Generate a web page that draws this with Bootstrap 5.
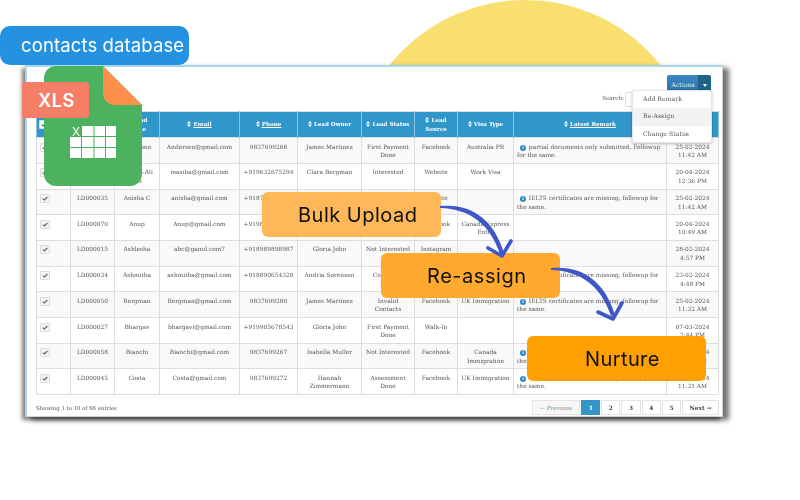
<!DOCTYPE html>
<html lang="en">
<head>
  <meta charset="UTF-8">
  <meta name="viewport" content="width=device-width, initial-scale=1.0">
  <title>Contacts database</title>
  <link href="https://cdn.jsdelivr.net/npm/bootstrap@5.3.0/dist/css/bootstrap.min.css" rel="stylesheet">
  <style>
    body { margin: 0; background: #fff; overflow: hidden; }
    .stage { position: relative; width: 800px; height: 500px; padding: 65px 0 0 25px; overflow: hidden; font-family: Inter, sans-serif; }
    .sun { position: absolute; left: 351px; top: 0; width: 348px; height: 348px; border-radius: 50%; background: #f9df70; }

    /* the screenshot of the app */
    .shot { position: relative; width: 698px; height: 352px; padding: 8px 5px 0 9px; background: #fff; border-top: 2px solid #a9d6f0; border-left: 2px solid #a9d6f0; border-radius: 0; box-shadow: 6px 3px 5px rgba(0,0,0,.55), -3px 3px 4px rgba(0,0,0,.5); font-family: "DejaVu Serif", serif; font-size: 5.9px; line-height: 8.5px; color: #555; filter: blur(.4px); }
    .act-bar { padding-right: 6px; }
    .act-btn { --bs-btn-padding-x: 0; --bs-btn-padding-y: 0; font-size: 6.2px; height: 19px; border: 0; border-radius: 2px; color: #e8f2f8; }
    .act-main { width: 32px; background: linear-gradient(#3c87c3, #2a6ea8); }
    .act-caret { width: 13px; background: #1f6389; }
    .act-caret::after { display: inline-block; content: ""; border-top: 3px solid #fff; border-left: 2px solid transparent; border-right: 2px solid transparent; vertical-align: middle; }
    .act-menu { display: block; position: absolute; z-index: 3; left: 605px; top: 23px; width: 80px; min-width: 0; height: 53px; padding: 0; border: 1px solid #e4e4e4; border-radius: 2px; box-shadow: 0 1px 3px rgba(0,0,0,.25); font-size: 6.2px; }
    .act-menu .dropdown-item { height: 17.3px; padding: 4px 10px; color: #555; }
    .act-menu .dropdown-item.picked { background: #f2f2f2; }
    .search-line { height: 23px; margin-top: -2px; padding-right: 52px; font-size: 5.6px; line-height: 13px; }
    .search-box { width: 40px; height: 15px; border: 1px solid #ddd; border-radius: 2px; margin-left: 1px; }

    .leads { --bs-table-striped-bg: #f9f9f9; --bs-table-border-color: #ddd; --bs-table-color: #555; --bs-table-striped-color: #555; width: 682px; margin: 0; table-layout: fixed; border-color: #ddd; }
    .leads th, .leads td { padding: 4.5px 3px 3px; text-align: center; vertical-align: top; height: 25.7px; font-weight: 400; }
    .leads thead th { --bs-table-bg: #3197ca; --bs-table-color: #fff; height: 26px; padding: 0 2px; vertical-align: middle; color: #fff; font-weight: 700; font-size: 5.6px; border-color: #8cc4e0; }
    .leads thead th.sorted-on { text-decoration: underline; }
    .leads td.txt-left { text-align: left; }
    .sort-mark { width: 4px; height: 6px; margin-right: 2px; vertical-align: -1px; }
    .tick { display: block; width: 10px; height: 9px; border: 1px solid #ddd; border-radius: 1px; background: #f4f4f4; }
    .tick svg { display: block; width: 8px; height: 7px; }
    .info-dot { display: inline-block; width: 6px; height: 6px; margin: 0 1px 0 3px; border-radius: 50%; background: #2b87c5; color: #fff; font-size: 4.5px; line-height: 6px; text-align: center; font-weight: 700; }
    .c-box { width: 34px; } .c-id { width: 44px; } .c-name { width: 45px; } .c-mail { width: 80px; } .c-ph { width: 58px; }
    .c-own { width: 64px; } .c-st { width: 53px; } .c-src { width: 43px; } .c-visa { width: 56px; } .c-rem { width: 153px; } .c-date { width: 52px; }

    .shot-foot { height: 24px; width: 683px; padding-top: 5px; }
    .shot-foot .pagination { --bs-pagination-padding-x: 0; --bs-pagination-padding-y: 0; --bs-pagination-font-size: 5.8px; --bs-pagination-color: #444; --bs-pagination-border-color: #e4e4e4; --bs-pagination-active-bg: #3197ca; --bs-pagination-active-border-color: #3197ca; gap: 1px; margin: 0; }
    .shot-foot .page-link { width: 19.2px; height: 15px; margin-left: 0 !important; line-height: 14px; text-align: center; font-weight: 700; border-radius: 0 !important; }
    .shot-foot .page-link.pg-prev { width: 48px; font-weight: 400; color: #888; background: #f7f7f7; }
    .shot-foot .page-link.pg-next { width: 37px; }
    .foot-note { padding-top: 4px; font-size: 5.4px; }

    /* things laid over the screenshot */
    .db-label { position: absolute; z-index: 5; left: 0; top: 26px; width: 189px; height: 39px; padding-left: 21px; border-radius: 10px; background: #2492e0; color: #fff; font-size: 18.5px; line-height: 39px; letter-spacing: .12px; white-space: nowrap; filter: blur(.3px); }
    .xls-doc { position: absolute; z-index: 4; left: 44px; top: 66px; width: 98px; height: 120px; }
    .xls-tag { position: absolute; z-index: 5; left: 22px; top: 82px; width: 67px; height: 36px; padding-left: 2px; border-radius: 3px; background: #f47f66; color: #fff; font-size: 18px; font-weight: 600; line-height: 37px; text-align: center; letter-spacing: .5px; }
    .step { position: absolute; z-index: 6; width: 179px; height: 45px; border-radius: 6px; color: #111; font-size: 20px; line-height: 46px; white-space: nowrap; filter: blur(.25px); }
    .step-bulk { left: 262px; top: 192px; padding-left: 36px; letter-spacing: .5px; background: #feb859; }
    .step-assign { left: 381px; top: 253px; padding-left: 46px; letter-spacing: .55px; background: #ffa92e; }
    .step-nurture { left: 527px; top: 336px; padding-left: 58px; letter-spacing: .4px; background: #ffa000; }
    .flow-arrows { position: absolute; z-index: 7; left: 0; top: 0; width: 800px; height: 500px; pointer-events: none; }
  </style>
</head>
<body>
  <svg width="0" height="0" class="position-absolute">
    <symbol id="sortmark" viewBox="0 0 4 6"><path d="M2 0 4 2.4H0ZM2 6 0 3.6H4Z" fill="#fff"/></symbol>
    <symbol id="tickmark" viewBox="0 0 8 7"><path d="M1.8 3.6 3.4 5 6.4 2" fill="none" stroke="#666" stroke-width="1.2"/></symbol>
  </svg>

  <div class="stage">
    <div class="sun"></div>

    <div class="card shot">
      <div class="d-flex justify-content-end act-bar">
        <div class="btn-group">
          <button type="button" class="btn act-btn act-main">Actions</button>
          <button type="button" class="btn act-btn act-caret"></button>
        </div>
      </div>
      <ul class="dropdown-menu act-menu">
        <li><a class="dropdown-item" href="#">Add Remark</a></li>
        <li><a class="dropdown-item picked" href="#">Re-Assign</a></li>
        <li><a class="dropdown-item" href="#">Change Status</a></li>
      </ul>
      <div class="d-flex justify-content-end align-items-start search-line">
        <span>Search:</span><span class="search-box"></span>
      </div>

      <table class="table table-bordered table-striped leads">
        <colgroup>
          <col class="c-box"><col class="c-id"><col class="c-name"><col class="c-mail"><col class="c-ph"><col class="c-own"><col class="c-st"><col class="c-src"><col class="c-visa"><col class="c-rem"><col class="c-date">
        </colgroup>
        <thead>
          <tr>
            <th><span class="tick"><svg><use href="#tickmark"/></svg></span></th>
            <th><svg class="sort-mark"><use href="#sortmark"/></svg>Lead ID</th>
            <th><svg class="sort-mark"><use href="#sortmark"/></svg>Lead<br>Name</th>
            <th class="sorted-on"><svg class="sort-mark"><use href="#sortmark"/></svg>Email</th>
            <th class="sorted-on"><svg class="sort-mark"><use href="#sortmark"/></svg>Phone</th>
            <th><svg class="sort-mark"><use href="#sortmark"/></svg>Lead Owner</th>
            <th><svg class="sort-mark"><use href="#sortmark"/></svg>Lead Status</th>
            <th><svg class="sort-mark"><use href="#sortmark"/></svg>Lead Source</th>
            <th><svg class="sort-mark"><use href="#sortmark"/></svg>Visa Type</th>
            <th class="sorted-on"><svg class="sort-mark"><use href="#sortmark"/></svg>Latest Remark</th>
            <th><svg class="sort-mark"><use href="#sortmark"/></svg>Added</th>
          </tr>
        </thead>
        <tbody>
          <tr>
            <td><span class="tick"><svg><use href="#tickmark"/></svg></span></td><td>LD000011</td><td>Andersen</td><td>Andersen@gmail.com</td><td>9837699268</td><td>James Martinez</td><td>First Payment Done</td><td>Facebook</td><td>Australia PR</td>
            <td class="txt-left"><span class="info-dot">i</span> partial documents only submitted, Followup for the same.</td><td>25-02-2024 11:42 AM</td>
          </tr>
          <tr>
            <td><span class="tick"><svg><use href="#tickmark"/></svg></span></td><td>LD000068</td><td>Masiha-Ali Alo</td><td>masiha@gmail.com</td><td>+919632675294</td><td>Clara Bergman</td><td>Interested</td><td>Website</td><td>Work Visa</td>
            <td></td><td>20-04-2024 12:36 PM</td>
          </tr>
          <tr>
            <td><span class="tick"><svg><use href="#tickmark"/></svg></span></td><td>LD000035</td><td>Anisha C</td><td>anisha@gmail.com</td><td>+918765432190</td><td>James Martinez</td><td>Interested</td><td>Website</td><td></td>
            <td class="txt-left"><span class="info-dot">i</span> IELTS certificates are missing, followup for the same.</td><td>25-02-2024 11:42 AM</td>
          </tr>
          <tr>
            <td><span class="tick"><svg><use href="#tickmark"/></svg></span></td><td>LD000070</td><td>Anup</td><td>Anup@gmail.com</td><td>+919876543210</td><td>Clara Bergman</td><td>Interested</td><td>Facebook</td><td>Canada Express Entry</td>
            <td></td><td>20-04-2024 10:49 AM</td>
          </tr>
          <tr>
            <td><span class="tick"><svg><use href="#tickmark"/></svg></span></td><td>LD000015</td><td>Ashlesha</td><td>abc@gamil.com7</td><td>+918989898987</td><td>Gloria John</td><td>Not Interested</td><td>Instagram</td><td></td>
            <td></td><td>28-02-2024 4:57 PM</td>
          </tr>
          <tr>
            <td><span class="tick"><svg><use href="#tickmark"/></svg></span></td><td>LD000034</td><td>Ashmitha</td><td>ashmitha@gmail.com</td><td>+918890654328</td><td>Andria Sorensen</td><td>Contacted</td><td>Facebook</td><td></td>
            <td class="txt-left"><span class="info-dot">i</span> IELTS certificates are missing, followup for the same.</td><td>23-02-2024 4:48 PM</td>
          </tr>
          <tr>
            <td><span class="tick"><svg><use href="#tickmark"/></svg></span></td><td>LD000050</td><td>Bergman</td><td>Bergman@gmail.com</td><td>9837699280</td><td>James Martinez</td><td>Invalid Contacts</td><td>Facebook</td><td>UK Immigration</td>
            <td class="txt-left"><span class="info-dot">i</span> IELTS certificates are missing, followup for the same.</td><td>25-02-2024 11:32 AM</td>
          </tr>
          <tr>
            <td><span class="tick"><svg><use href="#tickmark"/></svg></span></td><td>LD000027</td><td>Bhargav</td><td>bhargavi@gmail.com</td><td>+919905678543</td><td>Gloria John</td><td>First Payment Done</td><td>Walk-In</td><td></td>
            <td></td><td>07-03-2024 2:44 PM</td>
          </tr>
          <tr>
            <td><span class="tick"><svg><use href="#tickmark"/></svg></span></td><td>LD000058</td><td>Bianchi</td><td>Bianchi@gmail.com</td><td>9837699267</td><td>Isabella Muller</td><td>Not Interested</td><td>Facebook</td><td>Canada Immigration</td>
            <td class="txt-left"><span class="info-dot">i</span> IELTS certificates are missing, followup for the same.</td><td>25-02-2024 11:37 AM</td>
          </tr>
          <tr>
            <td><span class="tick"><svg><use href="#tickmark"/></svg></span></td><td>LD000045</td><td>Costa</td><td>Costa@gmail.com</td><td>9837699272</td><td>Hannah Zimmermann</td><td>Assessment Done</td><td>Facebook</td><td>UK Immigration</td>
            <td class="txt-left"><span class="info-dot">i</span> IELTS certificates are missing, followup for the same.</td><td>25-02-2024 11:31 AM</td>
          </tr>
        </tbody>
      </table>

      <div class="d-flex justify-content-between shot-foot">
        <div class="foot-note">Showing 1 to 10 of 66 entries</div>
        <ul class="pagination">
          <li class="page-item"><a class="page-link pg-prev" href="#">← Previous</a></li>
          <li class="page-item active"><a class="page-link" href="#">1</a></li>
          <li class="page-item"><a class="page-link" href="#">2</a></li>
          <li class="page-item"><a class="page-link" href="#">3</a></li>
          <li class="page-item"><a class="page-link" href="#">4</a></li>
          <li class="page-item"><a class="page-link" href="#">5</a></li>
          <li class="page-item"><a class="page-link pg-next" href="#">Next →</a></li>
        </ul>
      </div>
    </div>

    <div class="db-label">contacts database</div>

    <svg class="xls-doc" viewBox="0 0 98 120">
      <path d="M12 0H59L98 39V108a12 12 0 0 1-12 12H12A12 12 0 0 1 0 108V12A12 12 0 0 1 12 0Z" fill="#4db25f"/>
      <path d="M59 0 98 39H71A12 12 0 0 1 59 27Z" fill="#ff8f4d"/>
      <path d="M38 60H49.5V70H38ZM50.5 60H61V70H50.5ZM62 60H72V70H62ZM26 71H37V81H26ZM38 71H49.5V81H38ZM50.5 71H61V81H50.5ZM62 71H72V81H62ZM26 82H37V92H26ZM38 82H49.5V92H38ZM50.5 82H61V92H50.5ZM62 82H72V92H62Z" fill="#fff"/>
      <text x="32" y="70" text-anchor="middle" fill="#fff" font-size="12" font-family="Inter, sans-serif">X</text>
    </svg>
    <div class="xls-tag">XLS</div>

    <div class="step step-bulk">Bulk Upload</div>
    <div class="step step-assign">Re-assign</div>
    <div class="step step-nurture">Nurture</div>

    <svg class="flow-arrows" viewBox="0 0 800 500">
      <path d="M440 206C472 203 494 220 504 253L500 254C490 224 470 209 440 208Z" fill="#3f57c9"/>
      <path d="M551 268C583 265 605 282 615 315L611 316C601 286 581 271 551 270Z" fill="#3f57c9"/>
      <g fill="none" stroke="#3f57c9" stroke-width="3.6" stroke-linecap="round" stroke-linejoin="round">
        <path d="M488 248 502 256 511 241"/>
        <path d="M598 312 613 319 622 303"/>
      </g>
    </svg>
  </div>

  <script src="https://cdn.jsdelivr.net/npm/bootstrap@5.3.0/dist/js/bootstrap.bundle.min.js"></script>
</body>
</html>
